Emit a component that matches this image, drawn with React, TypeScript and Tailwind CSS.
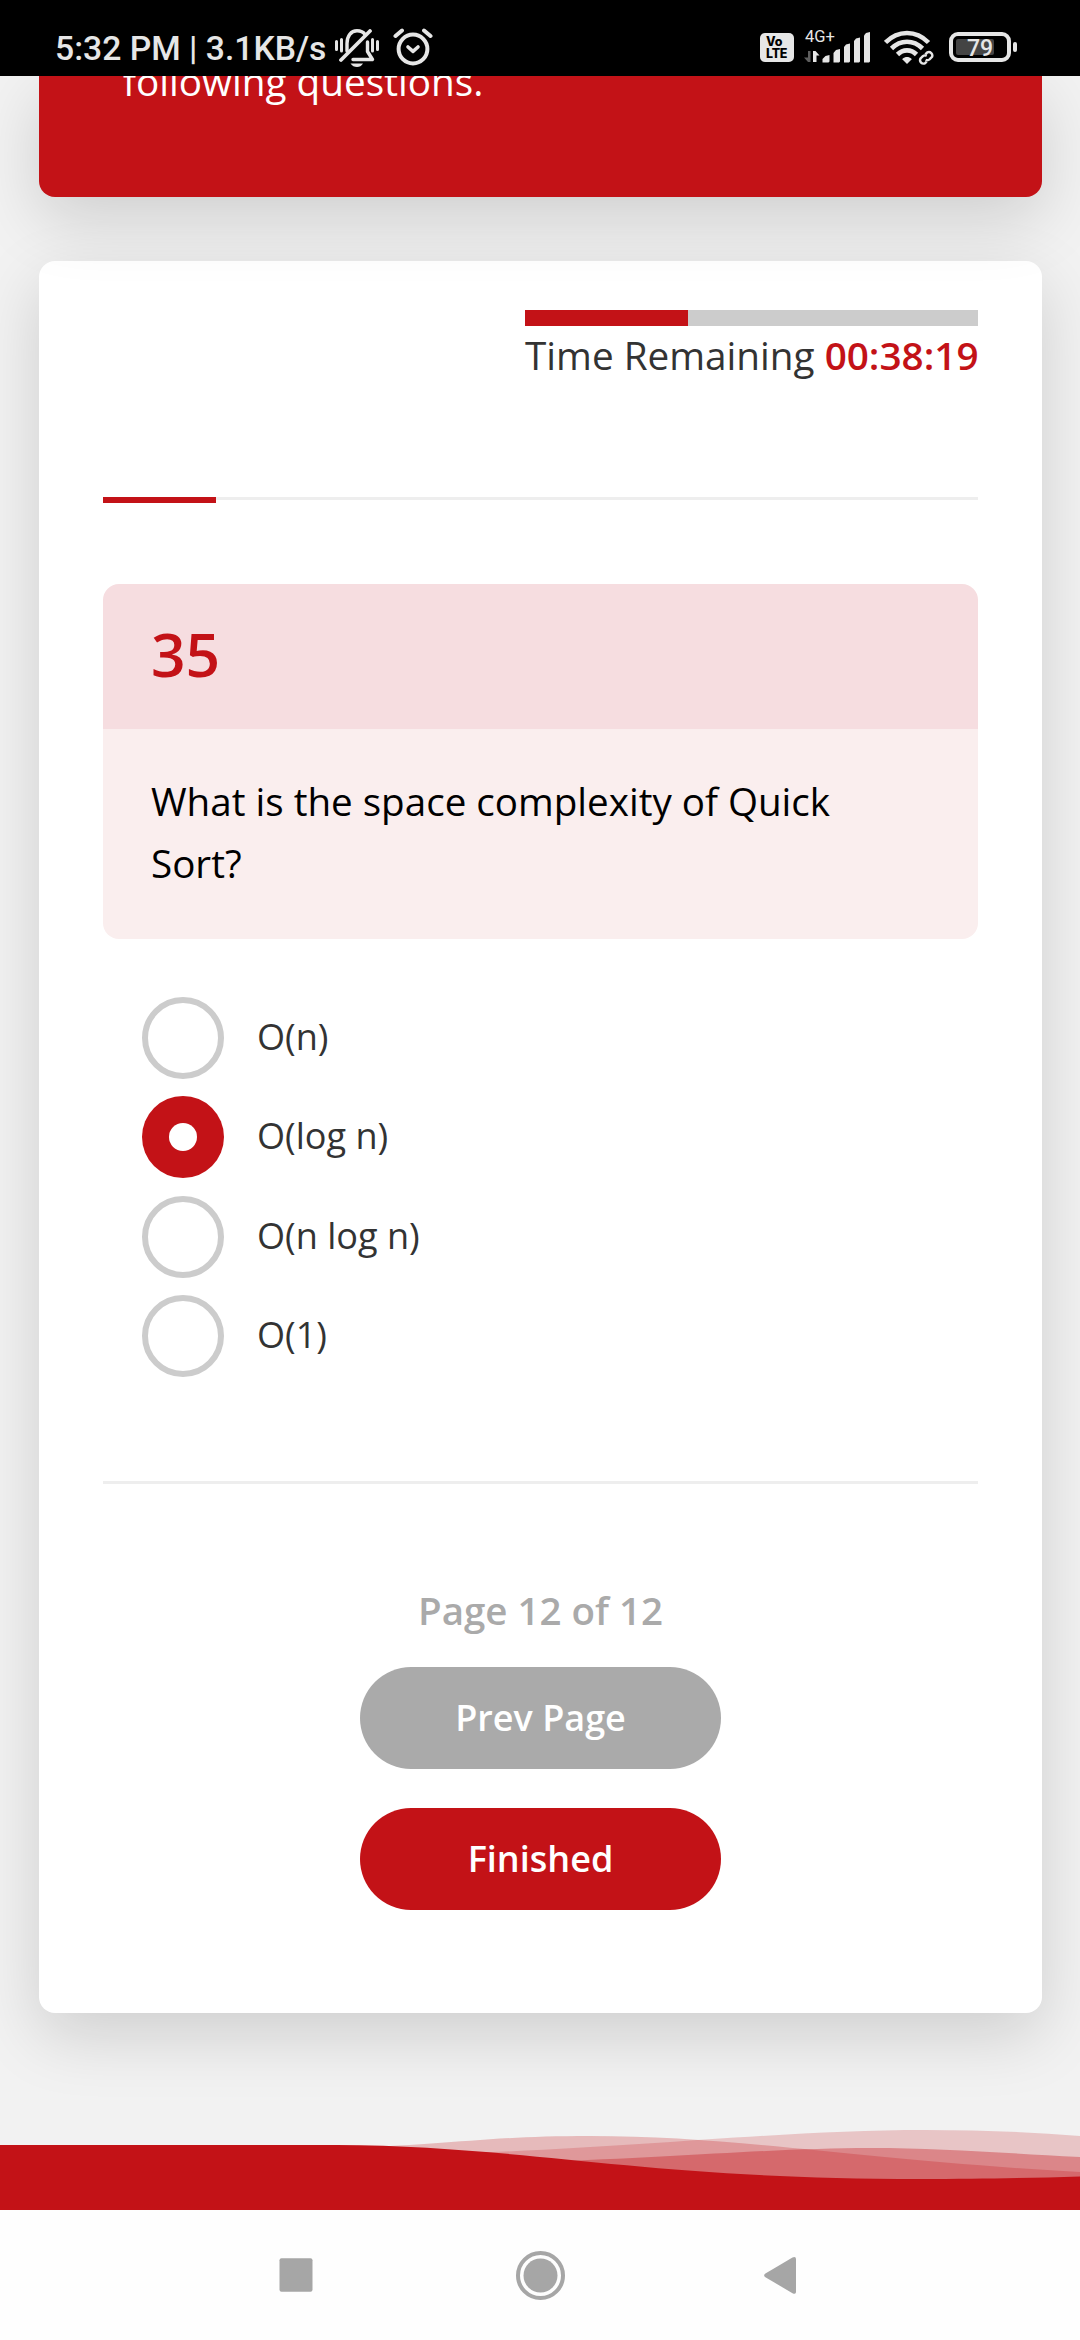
import React from "react";

const options = [
  { label: "O(n)", selected: false },
  { label: "O(log n)", selected: true },
  { label: "O(n log n)", selected: false },
  { label: "O(1)", selected: false },
];

function BellOffIcon() {
  return (
    <svg className="h-[38px] w-[44px]" viewBox="0 0 44 38" fill="none" stroke="#e6e6e6" strokeWidth="3" strokeLinecap="round">
      <path d="M1.5 12.5V20.5M6.5 10.5V22M42.5 12.5V20.5M37.5 10.5V22" />
      <path d="M12 22V14.5C12 7 16 1.8 22 1.8C25.500 1.800 28.500 3.200 30.200 5.700" strokeWidth="3.400" />
      <path d="M6 31L35 2" strokeWidth="3.800" />
      <path d="M32.500 13V22.500L37.500 30.500H18" strokeWidth="3.400" strokeLinejoin="round" />
      <path d="M31 14.500L33 12V22H31Z" fill="#e6e6e6" stroke="none" />
      <path d="M15.500 34.500H28C26.500 37 24.500 38 22 38C19.500 38 17 37 15.500 34.500Z" fill="#e6e6e6" stroke="none" />
    </svg>
  );
}

function AlarmIcon() {
  return (
    <svg className="h-[38px] w-[40px]" viewBox="0 0 40 38" fill="none" stroke="#e6e6e6" strokeWidth="4" strokeLinecap="round" strokeLinejoin="round">
      <circle cx="20" cy="21" r="14.400" />
      <path d="M2.500 8L9 2.500M37.500 8L31 2.500" />
      <path d="M15 19L20 23.300L25 19" strokeWidth="3.600" />
    </svg>
  );
}

function SignalIcon() {
  return (
    <svg className="absolute inset-0 h-[34px] w-[67px]" viewBox="0 0 67 34" fill="#e6e6e6">
      <path d="M4 22H6.500V33H4L0 28.500H4Z" fill="#5e5e5e" />
      <path d="M9 33V22H11.500L15.500 26.500H12.500V33Z" />
      <path d="M18.500 33.500V30L21.500 27L25.500 26V32.500L24.500 33.500Z" />
      <path d="M29.500 33.500V24L32 21L36 20V32.500L35 33.500Z" />
      <path d="M40 33.500V18L42 15.500L46 14.500V32.500L45 33.500Z" />
      <path d="M50 33.500V12L52 9.500L56 8.500V32.500L55 33.500Z" />
      <path d="M60 33.500V6.500L62 4L66 3V32.500L65 33.500Z" />
    </svg>
  );
}

function WifiIcon() {
  return (
    <svg className="h-[36px] w-[50px]" viewBox="0 0 50 36" fill="none" stroke="#e6e6e6" strokeWidth="4.600">
      <path d="M1.500 12.500C14 -0.200 32 -0.200 44.500 12.500" />
      <path d="M7.500 18.500C16.500 9.500 29.500 9.500 38.500 18.500" />
      <path d="M13.500 24.500C19 19 27 19 32.500 24.500" />
      <path d="M18.500 28.700C21 26.300 25 26.300 27.500 28.700V29.500L23 34L18.500 29.500Z" fill="#e6e6e6" stroke="none" />
      <g strokeWidth="2.400" transform="rotate(-45 42 28)">
        <path d="M40 31H37.500A3.500 3.500 0 0 1 37.500 24.500H41A3.500 3.500 0 0 1 44 27" />
        <path d="M44 25H47A3.500 3.500 0 0 1 47 31.500H43.500A3.500 3.500 0 0 1 40.500 29" />
      </g>
    </svg>
  );
}

function StatusBar() {
  return (
    <header className="relative z-20 flex h-[76px] shrink-0 items-start bg-black pt-[28px] font-['Roboto'] text-[#e6e6e6]">
      <span className="ml-[55px] h-[38px] w-[272px] whitespace-nowrap text-[33.7px] leading-[42px] font-medium">5:32 PM | 3.1KB/s</span>
      <span className="ml-[8px] pt-px"><BellOffIcon /></span>
      <span className="ml-[14px]"><AlarmIcon /></span>
      <div className="mt-[5px] ml-auto flex h-[29px] w-[34px] flex-col rounded-[5px] bg-[#e6e6e6] pt-[3px] pl-[6px] font-['Inter'] text-[12.5px] leading-[12px] font-extrabold text-black">
        <span>Vo</span>
        <span className="tracking-[-0.3px]">LTE</span>
      </div>
      <div className="relative mt-px ml-[10px] h-[34px] w-[67px]">
        <SignalIcon />
        <span className="absolute top-0 left-[1px] text-[16.5px] leading-[16px]">4G+</span>
      </div>
      <span className="mt-[2px] ml-[13px]"><WifiIcon /></span>
      <div className="relative mt-[4px] ml-[15px] flex h-[30px] w-[62px] items-center rounded-[9px] border-4 border-[#e6e6e6] px-[3px]">
        <div className="h-[16px] w-[38px] rounded-[2px] bg-[#444444]" />
        <span className="absolute inset-0 pt-px text-center text-[23px] leading-[24px] font-medium">79</span>
      </div>
      <div className="mt-[14px] mr-[63px] ml-[2px] h-[10px] w-[4px] rounded-full bg-[#e6e6e6]" />
    </header>
  );
}

function Waves() {
  return (
    <svg className="block h-[84px] w-full shrink-0" viewBox="0 2126 1080 84" fill="#c31217">
      <path opacity="0.25" d="M330 2148C450 2146 480 2136 590 2136C740 2136 860 2160 1080 2172V2210H330Z" />
      <path opacity="0.2" d="M440 2154C640 2148 780 2130 925 2130C980 2130 1030 2132 1080 2136V2210H440Z" />
      <path opacity="0.35" d="M540 2162C680 2157 780 2148 870 2148C940 2148 1000 2153 1080 2157V2210H540Z" />
      <path d="M0 2145H337C530 2146 640 2179 920 2179C980 2179 1030 2178 1080 2176.500V2210H0Z" />
    </svg>
  );
}

function NavigationBar() {
  return (
    <nav className="flex h-[130px] shrink-0 items-start bg-[#fefefe] pt-[41px]">
      <svg className="ml-[271px] h-[50px] w-[50px]" viewBox="0 0 50 50" fill="#a6a6a6"><rect x="8.500" y="7.300" width="33" height="33.500" rx="2" /></svg>
      <svg className="ml-[194px] h-[50px] w-[50px]" viewBox="0 0 50 50" fill="#a6a6a6">
        <circle cx="25.500" cy="24.500" r="17" />
        <circle cx="25.500" cy="24.500" r="22.500" fill="none" stroke="#a6a6a6" strokeWidth="4" />
      </svg>
      <svg className="ml-[190px] h-[50px] w-[50px]" viewBox="0 0 50 50" fill="#a6a6a6"><path d="M10 22.800L37.500 6.400Q41 5.200 41 8V41Q41 43.800 37.500 42.200L10 26Q8.300 24.400 10 22.800Z" /></svg>
    </nav>
  );
}

export default function App() {
  return (
    <div className="flex h-[2340px] w-[1080px] flex-col overflow-hidden bg-[#f2f2f2] font-['Open_Sans',sans-serif]">
      <StatusBar />
      <main className="flex h-[2050px] shrink-0 flex-col px-[39px]">
        <section className="relative z-10 h-[121px] w-[1003px] shrink-0 rounded-b-[16px] bg-[#c31217] px-[84px] shadow-[0_22px_66px_rgba(0,0,0,0.15)]">
          <p className="-mt-[26px] text-[38.7px] leading-[62px] whitespace-nowrap text-white">following questions.</p>
        </section>
        <section className="mt-[64px] flex h-[1752px] w-[1003px] shrink-0 flex-col rounded-[16px] bg-white px-[64px] pt-[49px] shadow-[0_22px_66px_rgba(0,0,0,0.15)]">
          <div className="w-[453px] self-end">
            <div className="h-[16px] bg-[#cccccc]"><div className="h-full w-[163px] bg-[#c31217]" /></div>
            <p className="h-[60px] text-[38.7px] leading-[58px] whitespace-nowrap text-[#333333]">Time Remaining <span className="font-semibold text-[#c31217]">00:38:19</span></p>
          </div>
          <div className="mt-[111px] h-[6px] w-full shrink-0"><div className="h-[3px] bg-[#eeeeee]"><div className="h-[6px] w-[113px] bg-[#c31217]" /></div></div>
          <div className="mt-[81px] shrink-0 overflow-hidden rounded-[16px]">
            <h2 className="h-[145px] bg-[#f6dde0] pl-[48px] text-[60.5px] leading-[140px] font-semibold text-[#c31217]">35</h2>
            <p className="h-[210px] bg-[#faeeee] pt-[41px] pl-[48px] text-[38.6px] leading-[62px] text-black">What is the space complexity of Quick<br />Sort?</p>
          </div>
          <ul className="mt-[58px] flex h-[380px] flex-col justify-between pl-[39px]">
            {options.map((option) => (
              <li key={option.label} className="flex h-[82px] items-center">
                {option.selected ? (
                  <span className="flex size-[82px] items-center justify-center rounded-full bg-[#c31217]"><span className="size-[28px] rounded-full bg-white" /></span>
                ) : (
                  <span className="size-[82px] rounded-full border-[6px] border-[#cccccc]" />
                )}
                <span className="mb-[4px] ml-[33px] h-[50px] text-[36.1px] leading-[50px] text-[#333333]">{option.label}</span>
              </li>
            ))}
          </ul>
          <div className="mt-[104px] h-[3px] shrink-0 bg-[#eeeeee]" />
          <div className="mt-[101px] flex flex-col items-center font-semibold">
            <p className="h-[60px] text-[38.5px] leading-[50px] text-[#aaaaaa]">Page 12 of 12</p>
            <button className="mt-[22px] h-[102px] w-[361px] rounded-full bg-[#aaaaaa] text-[36px] text-white">Prev Page</button>
            <button className="mt-[39px] h-[102px] w-[361px] rounded-full bg-[#c31217] text-[36px] text-white">Finished</button>
          </div>
        </section>
      </main>
      <Waves />
      <NavigationBar />
    </div>
  );
}
